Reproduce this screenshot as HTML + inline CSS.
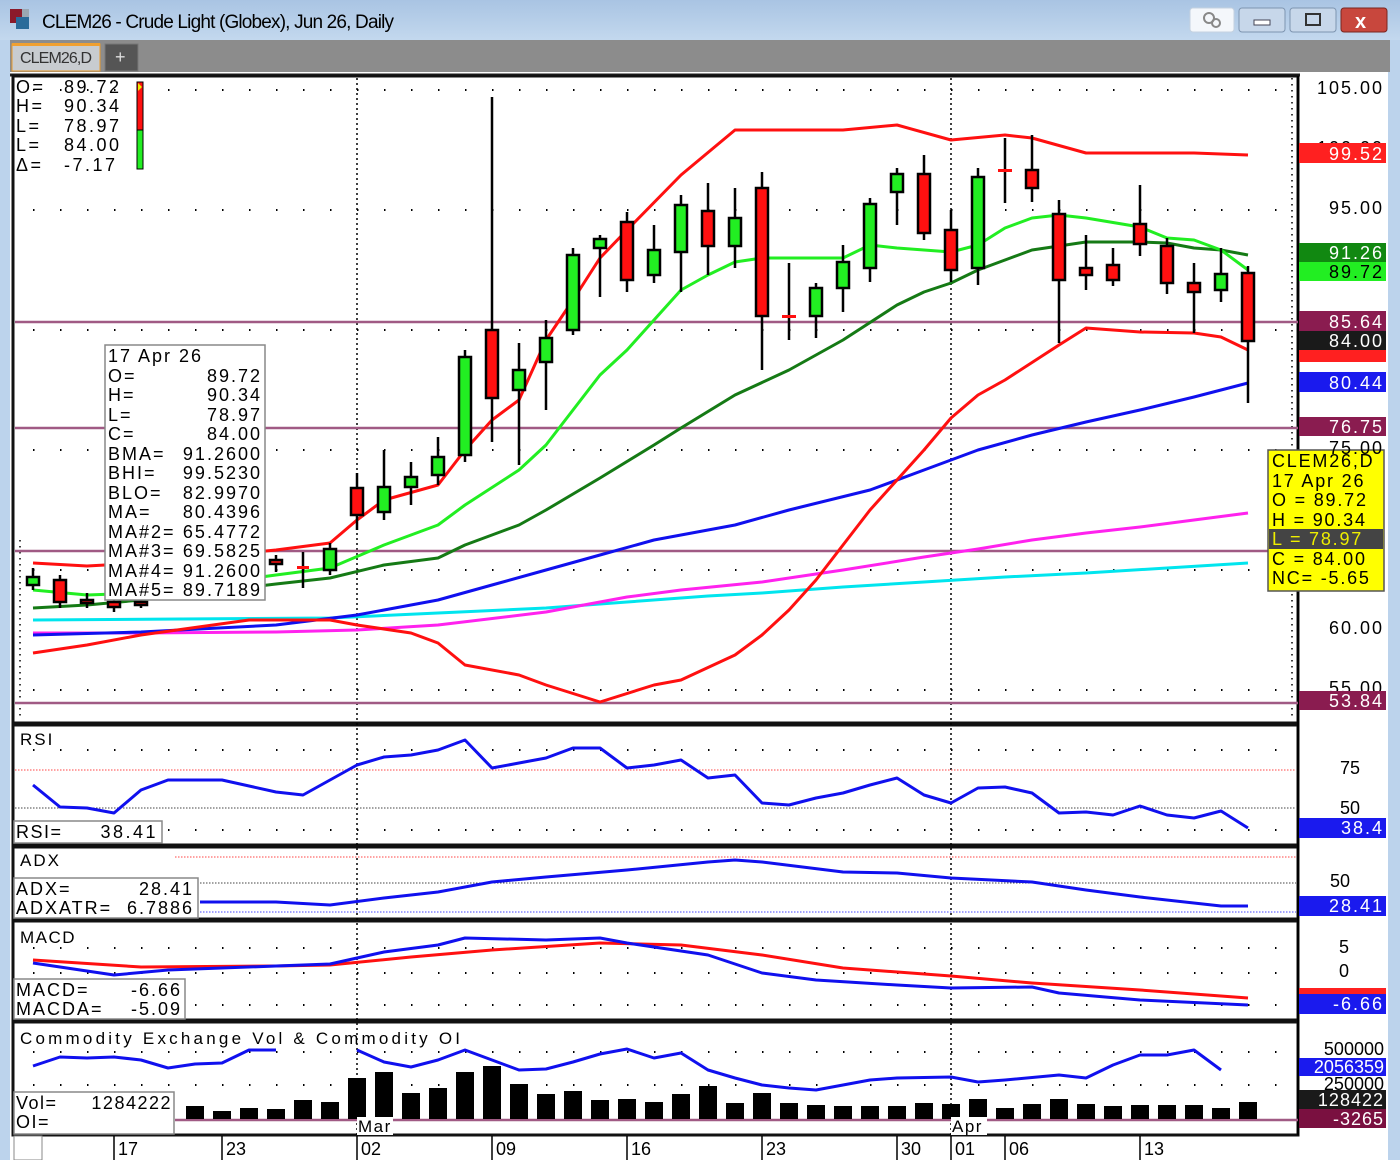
<!DOCTYPE html>
<html><head><meta charset="utf-8"><style>
html,body{margin:0;padding:0;width:1400px;height:1160px;overflow:hidden;background:#b9d1ea}
svg{display:block}
text{font-family:"Liberation Sans",sans-serif}
</style></head><body>
<svg width="1400" height="1160" viewBox="0 0 1400 1160" xmlns="http://www.w3.org/2000/svg">
<defs><linearGradient id="tb" x1="0" y1="0" x2="0" y2="1"><stop offset="0" stop-color="#a9c4e3"/><stop offset="1" stop-color="#c3d8ee"/></linearGradient></defs>
<rect x="0" y="0" width="1400" height="1160" fill="#bcd3ec"/>
<rect x="0" y="0" width="1400" height="40" fill="url(#tb)"/>
<rect x="10" y="9" width="12" height="14" fill="#8b1a2a"/><rect x="16" y="17" width="13" height="12" fill="#2a6b9a"/><rect x="22" y="9" width="7" height="8" fill="#9aa7b2"/>
<text x="42" y="28" font-size="19" fill="#000" textLength="352">CLEM26 - Crude Light (Globex), Jun 26, Daily</text>
<rect x="1190" y="8" width="44" height="24" rx="3" fill="#f4f7fb" stroke="#c5d2e0"/>
<circle cx="1209" cy="18" r="5" fill="none" stroke="#888" stroke-width="2"/><circle cx="1216" cy="23" r="4" fill="none" stroke="#888" stroke-width="2"/>
<rect x="1239" y="8" width="46" height="24" rx="3" fill="#c7d7ea" stroke="#7e95b0"/><rect x="1254" y="20" width="16" height="5" fill="#fff" stroke="#445"/>
<rect x="1290" y="8" width="46" height="24" rx="3" fill="#c7d7ea" stroke="#7e95b0"/><rect x="1306" y="14" width="14" height="11" fill="none" stroke="#333" stroke-width="2"/>
<rect x="1341" y="8" width="46" height="24" rx="3" fill="#c8473d" stroke="#7a2620"/><text x="1355" y="28" font-size="20" font-weight="bold" fill="#fff">x</text>
<rect x="10" y="40" width="1380" height="32" fill="#8c8c8c"/>
<rect x="12" y="44" width="88" height="27" fill="#c8ccd0" stroke="#e79a2c" stroke-width="1"/>
<rect x="12" y="43" width="88" height="3" fill="#f0a030"/>
<text x="20" y="63" font-size="16" fill="#333" textLength="72">CLEM26,D</text>
<rect x="105" y="44" width="33" height="27" fill="#555" stroke="#777"/><text x="115" y="63" font-size="18" fill="#ddd">+</text>
<rect x="10" y="72" width="1380" height="1088" fill="#fff"/>
<rect x="1388" y="72" width="12" height="1088" fill="#bcd3ec"/>
<rect x="0" y="40" width="10" height="1120" fill="#bcd3ec"/>
<line x1="10" y1="75" x2="1300" y2="75" stroke="#222" stroke-width="3"/>
<g fill="none" stroke="#111" stroke-width="3">
<rect x="13" y="76" width="1285" height="647"/>
<rect x="13" y="725" width="1285" height="120"/>
<rect x="13" y="847" width="1285" height="72"/>
<rect x="13" y="921" width="1285" height="99"/>
<rect x="13" y="1022" width="1285" height="113"/>
</g>
<g stroke="#000" stroke-width="2" stroke-dasharray="1.5 25.5">
<line x1="33" y1="90" x2="1298" y2="90"/><line x1="33" y1="210" x2="1298" y2="210"/><line x1="33" y1="330" x2="1298" y2="330"/><line x1="33" y1="450" x2="1298" y2="450"/><line x1="33" y1="570" x2="1298" y2="570"/><line x1="33" y1="690" x2="1298" y2="690"/>
<line x1="33" y1="750" x2="1298" y2="750"/><line x1="33" y1="830" x2="1298" y2="830"/>
<line x1="33" y1="948" x2="1298" y2="948"/><line x1="33" y1="973" x2="1298" y2="973"/><line x1="33" y1="1005" x2="1298" y2="1005"/>
<line x1="33" y1="1052" x2="1298" y2="1052"/><line x1="33" y1="1085" x2="1298" y2="1085"/>
</g>
<g stroke="#000" stroke-width="1.5" stroke-dasharray="2 3">
<line x1="357" y1="78" x2="357" y2="1135"/><line x1="951" y1="78" x2="951" y2="1135"/>
</g>
<g stroke="#000" stroke-width="2"><line x1="1298" y1="76" x2="1298" y2="1135"/></g>
<g stroke="#000" stroke-width="1.5" stroke-dasharray="1.5 4.5"><line x1="1292" y1="78" x2="1292" y2="720"/><line x1="20" y1="540" x2="20" y2="720"/></g>
<g stroke="#a05a84" stroke-width="2.5"><line x1="15" y1="322" x2="1298" y2="322"/><line x1="15" y1="428" x2="1298" y2="428"/><line x1="15" y1="551" x2="1298" y2="551"/><line x1="15" y1="703" x2="1298" y2="703"/><line x1="175" y1="1120" x2="1298" y2="1120"/></g>
<g fill="none" stroke-width="3" stroke-linejoin="round">
<polyline stroke="#00e5ee" points="33,620 330,618 438,613 546,608 627,602 708,596 762,593 843,587 924,582 1005,577 1086,573 1167,568 1248,563"/>
<polyline stroke="#ff22ee" points="33,633 141,633 276,632 357,630 438,625 546,612 627,597 681,590 762,582 843,570 924,557 978,549 1032,540 1086,533 1140,527 1194,520 1248,513"/>
<polyline stroke="#1010ee" points="33,635 141,632 276,625 357,615 411,605 438,600 492,585 546,570 600,555 654,540 735,525 789,510 870,490 924,470 978,450 1032,435 1086,422 1140,410 1194,397 1248,383"/>
<polyline stroke="#ff1010" points="33,653 87,645 141,635 249,620 330,620 357,625 411,633 438,643 465,665 519,675 546,685 600,702 654,685 681,680 735,655 762,635 789,610 816,580 843,545 870,510 897,480 924,450 951,418 978,395 1005,380 1059,345 1086,328 1140,332 1194,333 1221,337 1248,350"/>
<polyline stroke="#ff1010" points="33,563 87,566 141,563 276,550 330,543 357,520 384,500 438,485 465,450 492,420 519,400 546,340 573,300 600,258 627,230 681,175 735,130 789,130 843,130 897,125 951,140 1005,135 1032,138 1086,153 1140,153 1194,153 1248,155"/>
<polyline stroke="#157a15" points="33,608 87,605 141,600 276,584 330,578 384,565 438,558 465,545 519,525 546,510 600,478 654,445 681,428 735,395 789,370 843,340 897,305 924,292 951,283 978,270 1005,260 1032,250 1086,242 1140,242 1167,243 1194,248 1221,250 1248,255"/>
<polyline stroke="#22ee22" points="33,590 87,595 141,593 276,575 330,568 384,545 438,525 465,505 519,470 546,445 573,410 600,375 627,350 654,320 681,290 708,275 735,262 762,258 789,258 843,258 870,245 897,248 924,250 951,252 978,245 1005,228 1032,218 1059,215 1086,218 1140,227 1167,238 1194,240 1221,250 1248,270"/>
</g>
<g stroke="#000" stroke-width="2.5">
<line x1="33" y1="568" x2="33" y2="590"/><line x1="60" y1="575" x2="60" y2="608"/><line x1="87" y1="593" x2="87" y2="608"/><line x1="114" y1="598" x2="114" y2="612"/><line x1="141" y1="598" x2="141" y2="608"/>
<line x1="276" y1="555" x2="276" y2="572"/><line x1="303" y1="552" x2="303" y2="588"/><line x1="330" y1="543" x2="330" y2="575"/><line x1="357" y1="473" x2="357" y2="530"/><line x1="384" y1="450" x2="384" y2="520"/><line x1="411" y1="462" x2="411" y2="505"/><line x1="438" y1="437" x2="438" y2="485"/><line x1="465" y1="350" x2="465" y2="462"/><line x1="492" y1="97" x2="492" y2="442"/><line x1="519" y1="343" x2="519" y2="465"/><line x1="546" y1="320" x2="546" y2="410"/><line x1="573" y1="248" x2="573" y2="335"/><line x1="600" y1="235" x2="600" y2="297"/><line x1="627" y1="212" x2="627" y2="292"/><line x1="654" y1="225" x2="654" y2="283"/><line x1="681" y1="195" x2="681" y2="292"/><line x1="708" y1="183" x2="708" y2="275"/><line x1="735" y1="188" x2="735" y2="268"/><line x1="762" y1="172" x2="762" y2="370"/><line x1="789" y1="263" x2="789" y2="340"/><line x1="816" y1="283" x2="816" y2="338"/><line x1="843" y1="245" x2="843" y2="312"/><line x1="870" y1="198" x2="870" y2="282"/><line x1="897" y1="168" x2="897" y2="225"/><line x1="924" y1="155" x2="924" y2="240"/><line x1="951" y1="210" x2="951" y2="282"/><line x1="978" y1="168" x2="978" y2="285"/><line x1="1005" y1="138" x2="1005" y2="203"/><line x1="1032" y1="135" x2="1032" y2="202"/><line x1="1059" y1="200" x2="1059" y2="343"/><line x1="1086" y1="235" x2="1086" y2="290"/><line x1="1113" y1="248" x2="1113" y2="286"/><line x1="1140" y1="185" x2="1140" y2="256"/><line x1="1167" y1="238" x2="1167" y2="294"/><line x1="1194" y1="263" x2="1194" y2="333"/><line x1="1221" y1="248" x2="1221" y2="302"/><line x1="1248" y1="266" x2="1248" y2="403"/>
</g>
<g stroke="#000" stroke-width="2.5">
<rect x="27" y="577" width="12" height="8" fill="#22ee22"/><rect x="54" y="580" width="12" height="22" fill="#ff1010"/><rect x="81" y="600" width="12" height="3" fill="#ff1010"/><rect x="108" y="602" width="12" height="5" fill="#ff1010"/><rect x="135" y="602" width="12" height="3" fill="#ff1010"/>
<rect x="270" y="560" width="12" height="4" fill="#ff1010"/><rect x="297" y="566" width="12" height="3" fill="#ff1010" stroke="none"/><rect x="324" y="549" width="12" height="21" fill="#22ee22"/><rect x="351" y="488" width="12" height="27" fill="#ff1010"/><rect x="378" y="487" width="12" height="25" fill="#22ee22"/><rect x="405" y="477" width="12" height="10" fill="#22ee22"/><rect x="432" y="457" width="12" height="18" fill="#22ee22"/><rect x="459" y="357" width="12" height="98" fill="#22ee22"/><rect x="486" y="330" width="12" height="68" fill="#ff1010"/><rect x="513" y="370" width="12" height="20" fill="#22ee22"/><rect x="540" y="338" width="12" height="24" fill="#22ee22"/><rect x="567" y="255" width="12" height="75" fill="#22ee22"/><rect x="594" y="239" width="12" height="9" fill="#22ee22"/><rect x="621" y="222" width="12" height="58" fill="#ff1010"/><rect x="648" y="250" width="12" height="25" fill="#22ee22"/><rect x="675" y="205" width="12" height="47" fill="#22ee22"/><rect x="702" y="211" width="12" height="35" fill="#ff1010"/><rect x="729" y="218" width="12" height="28" fill="#22ee22"/><rect x="756" y="188" width="12" height="128" fill="#ff1010"/><rect x="782" y="315" width="14" height="3" fill="#ff1010" stroke="none"/><rect x="810" y="288" width="12" height="28" fill="#22ee22"/><rect x="837" y="262" width="12" height="26" fill="#22ee22"/><rect x="864" y="204" width="12" height="64" fill="#22ee22"/><rect x="891" y="174" width="12" height="18" fill="#22ee22"/><rect x="918" y="174" width="12" height="59" fill="#ff1010"/><rect x="945" y="230" width="12" height="40" fill="#ff1010"/><rect x="972" y="177" width="12" height="91" fill="#22ee22"/><rect x="998" y="169" width="14" height="3" fill="#ff1010" stroke="none"/><rect x="1026" y="170" width="12" height="18" fill="#ff1010"/><rect x="1053" y="214" width="12" height="66" fill="#ff1010"/><rect x="1080" y="268" width="12" height="7" fill="#ff1010"/><rect x="1107" y="265" width="12" height="15" fill="#ff1010"/><rect x="1134" y="224" width="12" height="20" fill="#ff1010"/><rect x="1161" y="246" width="12" height="37" fill="#ff1010"/><rect x="1188" y="283" width="12" height="9" fill="#ff1010"/><rect x="1215" y="274" width="12" height="16" fill="#22ee22"/><rect x="1242" y="273" width="12" height="68" fill="#ff1010"/>
</g>
<g font-size="18" letter-spacing="2.5" fill="#000">
<text x="16" y="93">O=</text><text x="64" y="93">89.72</text>
<text x="16" y="112">H=</text><text x="64" y="112">90.34</text>
<text x="16" y="132">L=</text><text x="64" y="132">78.97</text>
<text x="16" y="151">L=</text><text x="64" y="151">84.00</text>
<text x="16" y="171">Δ=</text><text x="64" y="171">-7.17</text>
</g>
<rect x="137" y="82" width="6" height="48" fill="#ff1010" stroke="#000"/><rect x="137" y="130" width="6" height="39" fill="#22ee22" stroke="#000"/><path d="M138,83 L142,87 L138,91Z" fill="#ee0"/>
<rect x="105" y="345" width="160" height="255" fill="#fff" stroke="#888" stroke-width="1.5"/>
<g font-size="18" letter-spacing="2" fill="#000">
<text x="108" y="362">17 Apr 26</text>
<text x="108" y="382">O=</text><text x="262" y="382" text-anchor="end">89.72</text>
<text x="108" y="401">H=</text><text x="262" y="401" text-anchor="end">90.34</text>
<text x="108" y="421">L=</text><text x="262" y="421" text-anchor="end">78.97</text>
<text x="108" y="440">C=</text><text x="262" y="440" text-anchor="end">84.00</text>
<text x="108" y="460">BMA=</text><text x="262" y="460" text-anchor="end">91.2600</text>
<text x="108" y="479">BHI=</text><text x="262" y="479" text-anchor="end">99.5230</text>
<text x="108" y="499">BLO=</text><text x="262" y="499" text-anchor="end">82.9970</text>
<text x="108" y="518">MA=</text><text x="262" y="518" text-anchor="end">80.4396</text>
<text x="108" y="538">MA#2=</text><text x="262" y="538" text-anchor="end">65.4772</text>
<text x="108" y="557">MA#3=</text><text x="262" y="557" text-anchor="end">69.5825</text>
<text x="108" y="577">MA#4=</text><text x="262" y="577" text-anchor="end">91.2600</text>
<text x="108" y="596">MA#5=</text><text x="262" y="596" text-anchor="end">89.7189</text>
</g>
<rect x="1268" y="450" width="116" height="141" fill="#ffff00" stroke="#555" stroke-width="1.5"/>
<rect x="1269" y="529" width="114" height="20" fill="#444"/>
<g font-size="18" letter-spacing="1.8" fill="#000">
<text x="1272" y="467">CLEM26,D</text><text x="1272" y="487">17 Apr 26</text><text x="1272" y="506">O = 89.72</text><text x="1272" y="526">H = 90.34</text><text x="1272" y="545" fill="#ee0">L = 78.97</text><text x="1272" y="565">C = 84.00</text><text x="1272" y="584">NC= -5.65</text>
</g>
<g font-size="18" letter-spacing="2" fill="#000" text-anchor="end">
<text x="1384" y="94">105.00</text><text x="1384" y="154">100.00</text><text x="1384" y="214">95.00</text><text x="1384" y="454">75.00</text><text x="1384" y="634">60.00</text><text x="1384" y="694">55.00</text>
</g>
<rect x="1299" y="143" width="87" height="20" fill="#ff2020"/>
<rect x="1299" y="243" width="87" height="19" fill="#118811"/>
<rect x="1299" y="262" width="87" height="19" fill="#22ee22"/>
<rect x="1299" y="311" width="87" height="20" fill="#8a1c50"/>
<rect x="1299" y="348" width="87" height="14" fill="#ff2020"/>
<rect x="1299" y="331" width="87" height="19" fill="#1a1a1a"/>
<rect x="1299" y="372" width="87" height="20" fill="#1a1aee"/>
<rect x="1299" y="417" width="87" height="19" fill="#8a1c50"/>
<rect x="1299" y="691" width="87" height="19" fill="#8a1c50"/>
<g font-size="18" letter-spacing="2" text-anchor="end" fill="#fff">
<text x="1384" y="160">99.52</text><text x="1384" y="259">91.26</text><text x="1384" y="278" fill="#000">89.72</text><text x="1384" y="328">85.64</text><text x="1384" y="347">84.00</text><text x="1384" y="389">80.44</text><text x="1384" y="433">76.75</text><text x="1384" y="707">53.84</text>
</g>
<g stroke-width="1" stroke-dasharray="1.5 1.5"><line x1="15" y1="770" x2="1296" y2="770" stroke="#f44"/><line x1="15" y1="808" x2="1296" y2="808" stroke="#444"/><line x1="175" y1="857" x2="1296" y2="857" stroke="#f44"/><line x1="200" y1="883" x2="1296" y2="883" stroke="#444"/><line x1="200" y1="912" x2="1296" y2="912" stroke="#44f"/></g>
<polyline fill="none" stroke="#1010ee" stroke-width="3" stroke-linejoin="round" points="33,785 60,807 87,808 114,813 141,790 168,780 222,780 276,792 303,795 330,780 357,765 384,757 411,755 438,750 465,740 492,768 519,763 546,758 573,748 600,748 627,768 654,765 681,760 708,778 735,775 762,803 789,805 816,798 843,793 870,785 897,778 924,795 951,803 978,788 1005,787 1032,793 1059,813 1086,812 1113,815 1140,806 1167,815 1194,818 1221,811 1248,828"/>
<text x="20" y="745" font-size="17" letter-spacing="2">RSI</text>
<rect x="14" y="821" width="148" height="22" fill="#fff" stroke="#888" stroke-width="1.5"/>
<text x="16" y="838" font-size="18" letter-spacing="1.5">RSI=</text><text x="158" y="838" font-size="18" letter-spacing="2.5" text-anchor="end">38.41</text>
<text x="1360" y="774" font-size="18" text-anchor="end">75</text><text x="1360" y="814" font-size="18" text-anchor="end">50</text>
<rect x="1299" y="818" width="87" height="20" fill="#1a1aee"/><text x="1384" y="834" font-size="18" letter-spacing="2" text-anchor="end" fill="#fff">38.4</text>
<polyline fill="none" stroke="#1010ee" stroke-width="3" stroke-linejoin="round" points="200,902 276,902 330,905 384,898 438,892 492,882 546,877 627,870 708,862 735,860 762,862 843,872 897,873 951,878 1032,882 1086,890 1140,897 1221,906 1248,906"/>
<text x="20" y="866" font-size="17" letter-spacing="2">ADX</text>
<rect x="14" y="878" width="184" height="40" fill="#fff" stroke="#888" stroke-width="1.5"/>
<g font-size="18" letter-spacing="2"><text x="16" y="895">ADX=</text><text x="194" y="895" text-anchor="end">28.41</text><text x="16" y="914">ADXATR=</text><text x="194" y="914" text-anchor="end">6.7886</text></g>
<text x="1350" y="887" font-size="18" text-anchor="end">50</text>
<rect x="1299" y="896" width="87" height="20" fill="#1a1aee"/><text x="1384" y="912" font-size="18" letter-spacing="2" text-anchor="end" fill="#fff">28.41</text>
<g fill="none" stroke-width="3" stroke-linejoin="round">
<polyline stroke="#ff1010" points="33,960 141,967 276,966 330,965 411,957 492,950 600,943 681,945 762,955 843,968 951,976 1032,983 1140,990 1248,998"/>
<polyline stroke="#1010ee" points="33,963 114,975 168,970 276,966 330,964 384,952 438,945 465,938 546,940 600,938 627,943 708,955 762,973 816,980 897,985 951,988 1032,987 1059,993 1140,1000 1248,1005"/>
</g>
<text x="20" y="943" font-size="17" letter-spacing="1.5">MACD</text>
<rect x="14" y="979" width="171" height="40" fill="#fff" stroke="#888" stroke-width="1.5"/>
<g font-size="18" letter-spacing="2"><text x="16" y="996">MACD=</text><text x="182" y="996" text-anchor="end">-6.66</text><text x="16" y="1015">MACDA=</text><text x="182" y="1015" text-anchor="end">-5.09</text></g>
<text x="1349" y="953" font-size="18" text-anchor="end">5</text><text x="1349" y="977" font-size="18" text-anchor="end">0</text>
<rect x="1299" y="988" width="87" height="8" fill="#ff2020"/>
<rect x="1299" y="994" width="87" height="20" fill="#1a1aee"/><text x="1384" y="1010" font-size="18" letter-spacing="2" text-anchor="end" fill="#fff">-6.66</text>
<polyline fill="none" stroke="#1010ee" stroke-width="3" stroke-linejoin="round" points="33,1066 60,1057 87,1058 114,1057 141,1060 168,1068 195,1064 222,1063 249,1050 276,1050"/>
<polyline fill="none" stroke="#1010ee" stroke-width="3" stroke-linejoin="round" points="357,1050 384,1062 411,1067 438,1060 465,1050 492,1060 519,1070 546,1069 573,1062 600,1054 627,1049 654,1058 681,1053 708,1070 735,1078 762,1085 789,1088 816,1090 843,1085 870,1080 897,1078 951,1077 978,1082 1005,1080 1059,1075 1086,1078 1113,1065 1140,1055 1167,1055 1194,1050 1221,1070"/>
<g fill="#000">
<rect x="186" y="1106" width="18" height="13"/><rect x="213" y="1111" width="18" height="8"/><rect x="240" y="1108" width="18" height="11"/><rect x="267" y="1109" width="18" height="10"/><rect x="294" y="1100" width="18" height="19"/><rect x="321" y="1102" width="18" height="17"/><rect x="348" y="1078" width="18" height="41"/><rect x="375" y="1072" width="18" height="47"/><rect x="402" y="1093" width="18" height="26"/><rect x="429" y="1088" width="18" height="31"/><rect x="456" y="1072" width="18" height="47"/><rect x="483" y="1066" width="18" height="53"/><rect x="510" y="1084" width="18" height="35"/><rect x="537" y="1094" width="18" height="25"/><rect x="564" y="1091" width="18" height="28"/><rect x="591" y="1100" width="18" height="19"/><rect x="618" y="1099" width="18" height="20"/><rect x="645" y="1102" width="18" height="17"/><rect x="672" y="1094" width="18" height="25"/><rect x="699" y="1086" width="18" height="33"/><rect x="726" y="1103" width="18" height="16"/><rect x="753" y="1093" width="18" height="26"/><rect x="780" y="1103" width="18" height="16"/><rect x="807" y="1105" width="18" height="14"/><rect x="834" y="1106" width="18" height="13"/><rect x="861" y="1106" width="18" height="13"/><rect x="888" y="1106" width="18" height="13"/><rect x="915" y="1103" width="18" height="16"/><rect x="942" y="1104" width="18" height="15"/><rect x="969" y="1099" width="18" height="20"/><rect x="996" y="1108" width="18" height="11"/><rect x="1023" y="1104" width="18" height="15"/><rect x="1050" y="1099" width="18" height="20"/><rect x="1077" y="1104" width="18" height="15"/><rect x="1104" y="1106" width="18" height="13"/><rect x="1131" y="1105" width="18" height="14"/><rect x="1158" y="1105" width="18" height="14"/><rect x="1185" y="1105" width="18" height="14"/><rect x="1212" y="1108" width="18" height="11"/><rect x="1239" y="1102" width="18" height="17"/>
</g>
<text x="20" y="1044" font-size="17" textLength="440" lengthAdjust="spacing">Commodity Exchange Vol &amp; Commodity OI</text>
<rect x="14" y="1092" width="160" height="42" fill="#fff" stroke="#888" stroke-width="1.5"/>
<g font-size="18" letter-spacing="1.5"><text x="16" y="1109">Vol=</text><text x="172" y="1109" text-anchor="end">1284222</text><text x="16" y="1128">OI=</text></g>
<rect x="357" y="1117" width="36" height="18" fill="#fff"/><text x="358" y="1132" font-size="17" letter-spacing="1.5">Mar</text>
<rect x="951" y="1117" width="36" height="18" fill="#fff"/><text x="952" y="1132" font-size="17" letter-spacing="1.5">Apr</text>
<text x="1384" y="1055" font-size="18" text-anchor="end">500000</text>
<text x="1384" y="1090" font-size="18" text-anchor="end">250000</text>
<rect x="1299" y="1058" width="87" height="18" fill="#1a1aee"/><text x="1384" y="1073" font-size="18" text-anchor="end" fill="#fff">2056359</text>
<rect x="1299" y="1090" width="87" height="19" fill="#1a1a1a"/><text x="1384" y="1106" font-size="18" letter-spacing="1" text-anchor="end" fill="#fff">128422</text>
<rect x="1299" y="1109" width="87" height="19" fill="#7a1040"/><text x="1384" y="1125" font-size="18" letter-spacing="1" text-anchor="end" fill="#fff">-3265</text>
<rect x="14" y="1136" width="28" height="24" fill="#fff" stroke="#888"/>
<g stroke="#000" stroke-width="1.5"><line x1="114" y1="1136" x2="114" y2="1160"/><line x1="222" y1="1136" x2="222" y2="1160"/><line x1="357" y1="1136" x2="357" y2="1160"/><line x1="492" y1="1136" x2="492" y2="1160"/><line x1="627" y1="1136" x2="627" y2="1160"/><line x1="762" y1="1136" x2="762" y2="1160"/><line x1="897" y1="1136" x2="897" y2="1160"/><line x1="951" y1="1136" x2="951" y2="1160"/><line x1="1005" y1="1136" x2="1005" y2="1160"/><line x1="1140" y1="1136" x2="1140" y2="1160"/></g>
<g font-size="18"><text x="118" y="1155">17</text><text x="226" y="1155">23</text><text x="361" y="1155">02</text><text x="496" y="1155">09</text><text x="631" y="1155">16</text><text x="766" y="1155">23</text><text x="901" y="1155">30</text><text x="955" y="1155">01</text><text x="1009" y="1155">06</text><text x="1144" y="1155">13</text></g>
</svg>
</body></html>
